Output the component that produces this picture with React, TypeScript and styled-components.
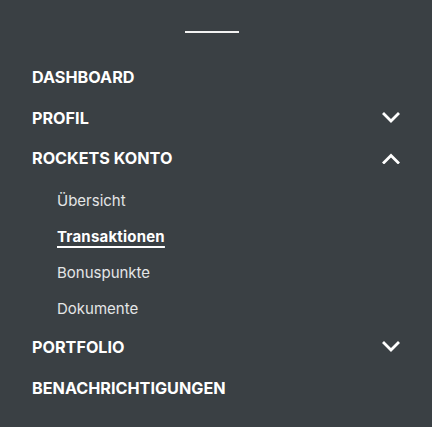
import React from "react";
import styled, { createGlobalStyle } from "styled-components";

const GlobalStyle = createGlobalStyle`
  html, body {
    margin: 0;
    padding: 0;
    background: #3a4044;
  }
  body {
    font-family: Inter, "Noto Sans", sans-serif;
  }
`;

const Drawer = styled.nav`
  width: 432px;
  height: 427px;
  background: #3a4044;
  color: #fff;
  display: flex;
  flex-direction: column;
  box-sizing: border-box;
  padding: 31px 31px 0 32px;
`;

const Handle = styled.div`
  align-self: flex-start;
  margin-left: 153px;
  width: 54px;
  height: 2px;
  background: #f2f2f2;
  margin-bottom: 24px;
`;

const MenuList = styled.ul`
  list-style: none;
  margin: 0;
  padding: 0;
  display: flex;
  flex-direction: column;
`;

const MenuRow = styled.li`
  height: 40.5px;
  display: flex;
  align-items: center;
  justify-content: space-between;
  font-size: 16.2px;
  font-weight: 700;
  text-transform: uppercase;
`;

const SubList = styled.ul`
  list-style: none;
  margin: 0;
  padding: 3.5px 0 1px 25px;
  display: flex;
  flex-direction: column;
`;

const SubRow = styled.li<{ $active?: boolean }>`
  height: 36px;
  display: flex;
  align-items: center;
  font-size: 15px;
  color: ${(p) => (p.$active ? "#fff" : "#e4e6e7")};
  font-weight: ${(p) => (p.$active ? 700 : 400)};
  text-decoration: ${(p) => (p.$active ? "underline" : "none")};
  text-underline-offset: 4px;
  text-decoration-thickness: 1.5px;
  letter-spacing: ${(p) => (p.$active ? "0.2px" : "0")};
`;

const Chevron = ({ up }: { up?: boolean }) => (
  <svg width="20" height="12" viewBox="0 0 20 12" fill="none">
    <path
      d={up ? "M3 10.5 L10 3.5 L17 10.5" : "M3 2 L10 9 L17 2"}
      stroke="#fff"
      strokeWidth="2.8"
      strokeLinecap="square"
    />
  </svg>
);

export default function App() {
  return (
    <>
      <GlobalStyle />
      <Drawer>
        <Handle />
        <MenuList>
          <MenuRow>Dashboard</MenuRow>
          <MenuRow>
            Profil
            <Chevron />
          </MenuRow>
          <MenuRow>
            Rockets Konto
            <Chevron up />
          </MenuRow>
          <SubList>
            <SubRow>Übersicht</SubRow>
            <SubRow $active>Transaktionen</SubRow>
            <SubRow>Bonuspunkte</SubRow>
            <SubRow>Dokumente</SubRow>
          </SubList>
          <MenuRow>
            Portfolio
            <Chevron />
          </MenuRow>
          <MenuRow>Benachrichtigungen</MenuRow>
        </MenuList>
      </Drawer>
    </>
  );
}
